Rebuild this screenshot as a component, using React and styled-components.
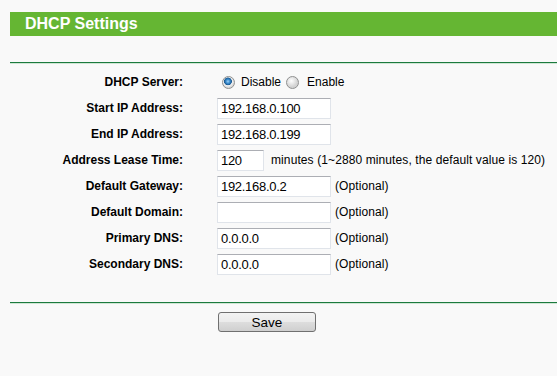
import React from 'react';
import styled, { createGlobalStyle } from 'styled-components';

const GlobalStyle = createGlobalStyle`
  html, body {
    margin: 0;
    padding: 0;
    background-color: #f9f9f9;
    font-family: "Liberation Sans", Arial, sans-serif;
    font-size: 12px;
    color: #000;
  }
`;

const Page = styled.div`
  width: 557px;
  height: 376px;
  padding-top: 12px;
  box-sizing: border-box;
  overflow: hidden;
`;

const TitleBar = styled.div`
  margin-left: 10px;
  height: 24px;
  padding-left: 15px;
  background-color: #65b633;
  color: #fff;
  font-weight: bold;
  font-size: 16px;
  line-height: 24px;
`;

const Divider = styled.div`
  margin-left: 10px;
  height: 1px;
  background-color: #1c7a3e;
  border-bottom: 1px solid #cfe6d4;
  margin-top: ${(p) => p.top}px;
`;

const Form = styled.div`
  display: grid;
  grid-template-columns: 183px 1fr;
  column-gap: 34px;
  padding-top: 5px;
`;

const Label = styled.div`
  height: 26px;
  display: flex;
  align-items: center;
  justify-content: flex-end;
  font-weight: bold;
  font-size: 12px;
  white-space: nowrap;
`;

const Field = styled.div`
  height: 26px;
  display: flex;
  align-items: center;
  white-space: nowrap;
  font-size: 12px;
`;

const Radio = styled.span`
  display: inline-block;
  box-sizing: border-box;
  width: 13px;
  height: 13px;
  margin: 0 ${(p) => p.$gap}px 0 5px;
  border-radius: 50%;
  border: 1px solid #8f9090;
  background: ${(p) =>
    p.$checked
      ? 'radial-gradient(circle at 45% 40%, #9fd2f5 0, #3a8ccf 2px, #1c5a92 3.6px, #f4f4f4 4.2px, #d9d9d9 6px)'
      : 'radial-gradient(circle at 40% 35%, #ffffff 0, #f0f0f0 2px, #d3d3d3 6px)'};
`;

const Input = styled.div`
  box-sizing: border-box;
  width: ${(p) => p.$w}px;
  height: 21px;
  padding: 0 3px;
  border: 1px solid #e0e4ea;
  border-top-color: #acaeb4;
  background-color: #fff;
  display: flex;
  align-items: center;
  font-size: 13px;
  letter-spacing: -0.3px;
`;

const Note = styled.span`
  margin-left: ${(p) => p.$gap}px;
  letter-spacing: 0.1px;
`;

const ButtonRow = styled.div`
  padding: 8px 0 0 218px;
`;

const SaveButton = styled.button`
  width: 98px;
  height: 20px;
  padding: 0;
  border: 1px solid #707070;
  border-radius: 3px;
  background: linear-gradient(#f3f3f3 0%, #ebebeb 48%, #dddddd 52%, #cfcfcf 100%);
  font-family: "Liberation Sans", Arial, sans-serif;
  font-size: 13.5px;
  color: #000;
  line-height: 20px;
`;

const rows = [
  { label: 'Start IP Address:', value: '192.168.0.100' },
  { label: 'End IP Address:', value: '192.168.0.199' },
  { label: 'Address Lease Time:', value: '120', width: 47, note: 'minutes (1~2880 minutes, the default value is 120)', gap: 7 },
  { label: 'Default Gateway:', value: '192.168.0.2', note: '(Optional)', gap: 4 },
  { label: 'Default Domain:', value: '', note: '(Optional)', gap: 4 },
  { label: 'Primary DNS:', value: '0.0.0.0', note: '(Optional)', gap: 4 },
  { label: 'Secondary DNS:', value: '0.0.0.0', note: '(Optional)', gap: 4 },
];

function App() {
  return (
    <Page>
      <GlobalStyle />
      <TitleBar>DHCP Settings</TitleBar>
      <Divider top={26} />
      <Form>
        <Label>DHCP Server:</Label>
        <Field>
          <Radio $checked $gap={6} />
          Disable
          <Radio $gap={8} />
          Enable
        </Field>
        {rows.map((r) => (
          <React.Fragment key={r.label}>
            <Label>{r.label}</Label>
            <Field>
              <Input $w={r.width || 114}>{r.value}</Input>
              {r.note && <Note $gap={r.gap}>{r.note}</Note>}
            </Field>
          </React.Fragment>
        ))}
      </Form>
      <Divider top={25} />
      <ButtonRow>
        <SaveButton type="button">Save</SaveButton>
      </ButtonRow>
    </Page>
  );
}

export default App;
